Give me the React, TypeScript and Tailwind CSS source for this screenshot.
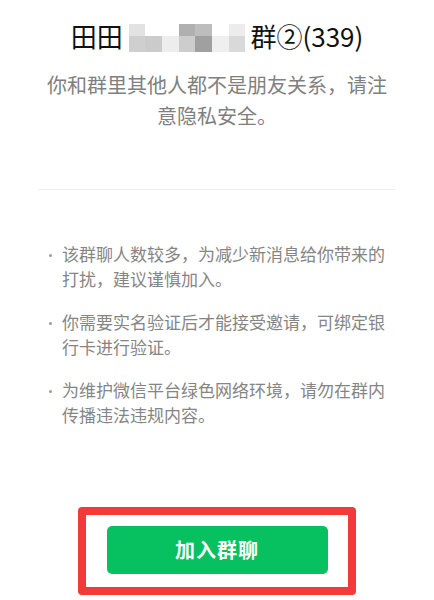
import React from 'react';

// blurred name pixels, two rows of seven blocks
const mosaicTop = ['#e2e2e2', '#ffffff', '#ffffff', '#b0b0b0', '#bdbdbd', '#ffffff', '#ececec'];
const mosaicBottom = ['#cfcfcf', '#cbcbcb', '#ededed', '#cdcdcd', '#a0a0a0', '#efefef', '#d9d9d9'];

const tips = [
  '该群聊人数较多，为减少新消息给你带来的打扰，建议谨慎加入。',
  '你需要实名验证后才能接受邀请，可绑定银行卡进行验证。',
  '为维护微信平台绿色网络环境，请勿在群内传播违法违规内容。',
];

const Mosaic: React.FC = () => (
  <span className="inline-flex flex-col align-middle ml-[6px] mr-[5px] -mt-[4px]">
    <span className="flex h-[12px]">
      {mosaicTop.map((c, i) => (
        <span key={i} className="w-[16.7px] h-full" style={{ backgroundColor: c }} />
      ))}
    </span>
    <span className="flex h-[16px]">
      {mosaicBottom.map((c, i) => (
        <span key={i} className="w-[16.7px] h-full" style={{ backgroundColor: c }} />
      ))}
    </span>
  </span>
);

const App: React.FC = () => {
  return (
    <div className="w-[434px] h-[600px] bg-white overflow-hidden flex flex-col items-center font-['Noto_Sans_CJK_SC','Noto_Sans',sans-serif]">
      <h1 className="mt-[17px] h-[37px] leading-[37px] text-[26px] font-normal text-[#111111] whitespace-nowrap">
        田田
        <Mosaic />
        群②(339)
      </h1>

      <p className="mt-[15px] w-[354px] text-center text-[20px] leading-[31px] text-[#808080]">
        你和群里其他人都不是朋友关系，请注意隐私安全。
      </p>

      <div className="mt-[58px] w-[358px] h-px bg-[#efefef]" />

      <ul className="mt-[51px] w-[358px] flex flex-col gap-[18px]">
        {tips.map((t) => (
          <li key={t} className="flex items-start pl-[11px] text-[17px] leading-[25px] text-[#858585]">
            <span className="mt-[13px] w-[3px] h-[3px] rounded-full bg-[#9a9a9a] shrink-0" />
            <span className="ml-[10px]">{t}</span>
          </li>
        ))}
      </ul>

      <div className="mt-auto mb-[5px] w-[278px] h-[88px] border-[8px] border-[#f23a3a] rounded-[4px] flex items-center justify-center">
        <button className="w-[221px] h-[48px] mt-[-2px] rounded-[5px] bg-[#07c160] text-white text-[20px] font-bold tracking-[1px]">
          加入群聊
        </button>
      </div>
    </div>
  );
};

export default App;
